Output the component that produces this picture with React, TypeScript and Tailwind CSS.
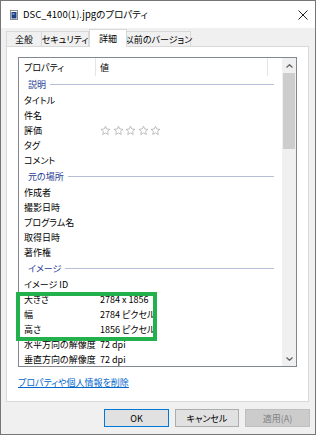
import React from "react";

type Row =
  | { kind: "group"; label: string }
  | { kind: "item"; label: string; value?: string; stars?: boolean };

const rows: Row[] = [
  { kind: "group", label: "説明" },
  { kind: "item", label: "タイトル" },
  { kind: "item", label: "件名" },
  { kind: "item", label: "評価", stars: true },
  { kind: "item", label: "タグ" },
  { kind: "item", label: "コメント" },
  { kind: "group", label: "元の場所" },
  { kind: "item", label: "作成者" },
  { kind: "item", label: "撮影日時" },
  { kind: "item", label: "プログラム名" },
  { kind: "item", label: "取得日時" },
  { kind: "item", label: "著作権" },
  { kind: "group", label: "イメージ" },
  { kind: "item", label: "イメージ ID" },
  { kind: "item", label: "大きさ", value: "2784 x 1856" },
  { kind: "item", label: "幅", value: "2784 ピクセル" },
  { kind: "item", label: "高さ", value: "1856 ピクセル" },
  { kind: "item", label: "水平方向の解像度", value: "72 dpi" },
  { kind: "item", label: "垂直方向の解像度", value: "72 dpi" },
];

const tabs = [
  { label: "全般", w: "w-[36px]" },
  { label: "セキュリティ", w: "w-[48px]" },
  { label: "詳細", w: "w-[38px]", active: true },
  { label: "以前のバージョン", w: "w-[65px]" },
];

const Star = () => (
  <svg width="11" height="11" viewBox="0 0 24 24" fill="none" stroke="#a8a8a8" strokeWidth="1.6" strokeLinejoin="round">
    <path d="M12 2.5l2.9 6.3 6.8.7-5.1 4.6 1.5 6.7L12 17.3l-6.1 3.5 1.5-6.7-5.1-4.6 6.8-.7z" />
  </svg>
);

const App = () => {
  return (
    <div className="relative w-[316px] h-[435px] border border-[#767676] bg-[#f0f0f0] flex flex-col font-['Noto_Sans_CJK_JP',sans-serif] [font-feature-settings:'palt'] text-[9px] text-black leading-none overflow-hidden">
      {/* title bar */}
      <div className="h-[27px] bg-white flex items-center pl-[9px] pr-[7px] shrink-0">
        <svg width="8" height="10" viewBox="0 0 8 10" className="mr-[5px]">
          <rect x="0.5" y="0.5" width="7" height="9" fill="#ffffff" stroke="#8a8a8a" />
          <rect x="1.5" y="2" width="5" height="6.5" fill="#1c3f86" />
          <rect x="2.5" y="3" width="2" height="2" fill="#6d8fc7" />
        </svg>
        <span className="text-[9.5px] text-black">DSC_4100(1).jpgのプロパティ</span>
        <div className="flex-1" />
        <svg width="10" height="10" viewBox="0 0 10 10" stroke="#222" strokeWidth="1">
          <path d="M0.5 0.5L9.5 9.5M9.5 0.5L0.5 9.5" />
        </svg>
      </div>

      {/* tabs */}
      <div className="h-[18px] flex items-end pl-[5px] shrink-0">
        {tabs.map((t) =>
          t.active ? (
            <div
              key={t.label}
              className={`${t.w} h-[18px] -mb-px bg-white border border-[#d9d9d9] border-b-0 flex items-center justify-center relative z-10`}
            >
              {t.label}
            </div>
          ) : (
            <div
              key={t.label}
              className={`${t.w} h-[15px] bg-[#f0f0f0] border border-[#d9d9d9] border-b-0 -ml-px first:ml-0 flex items-center justify-center whitespace-nowrap`}
            >
              {t.label}
            </div>
          )
        )}
      </div>

      {/* panel */}
      <div className="ml-[5px] w-[303px] h-[356px] bg-white border border-[#d9d9d9] pt-[10px] pl-[11px] shrink-0 flex flex-col">
        <div className="w-[279px] h-[310px] border border-[#828790] flex overflow-hidden">
          <div className="flex-1 flex flex-col overflow-hidden">
            {/* header */}
            <div className="h-[18px] flex items-stretch shrink-0">
              <div className="w-[77px] border-r border-[#e5e5e5] flex items-center pl-[5px]">プロパティ</div>
              <div className="w-[172px] border-r border-[#e5e5e5] flex items-center pl-[4px]">値</div>
              <div className="flex-1" />
            </div>
            {rows.map((r, i) =>
              r.kind === "group" ? (
                <div key={i} className="h-[17px] flex items-center pl-[9px] pr-[8px] shrink-0">
                  <span className="text-[#1e3c96] mr-[4px]">{r.label}</span>
                  <div className="flex-1 h-px bg-[#b4bfd6]" />
                </div>
              ) : (
                <div key={i} className="h-[15px] flex items-center shrink-0">
                  <div className="w-[77px] pl-[5px] whitespace-nowrap">{r.label}</div>
                  <div className="pl-[4px] flex items-center whitespace-nowrap">
                    {r.stars ? (
                      <div className="flex gap-[1.5px]">
                        <Star />
                        <Star />
                        <Star />
                        <Star />
                        <Star />
                      </div>
                    ) : (
                      r.value
                    )}
                  </div>
                </div>
              )
            )}
          </div>
          {/* scrollbar */}
          <div className="w-[14px] bg-[#f0f0f0] flex flex-col items-center shrink-0">
            <div className="h-[15px] flex items-center justify-center">
              <svg width="7" height="4" viewBox="0 0 7 4" fill="none" stroke="#606060" strokeWidth="1.2">
                <path d="M0.5 3.5L3.5 0.7L6.5 3.5" />
              </svg>
            </div>
            <div className="w-[12px] h-[76px] bg-[#cdcdcd]" />
            <div className="flex-1" />
            <div className="h-[15px] flex items-center justify-center">
              <svg width="7" height="4" viewBox="0 0 7 4" fill="none" stroke="#606060" strokeWidth="1.2">
                <path d="M0.5 0.5L3.5 3.3L6.5 0.5" />
              </svg>
            </div>
          </div>
        </div>
        <div className="mt-[10px] h-[10px] flex items-center">
          <span className="text-[#0066cc] underline underline-offset-1">プロパティや個人情報を削除</span>
        </div>
      </div>

      {/* buttons */}
      <div className="flex justify-end gap-[6px] pr-[5px] mt-[7px]">
        <button className="w-[65px] h-[18px] bg-[#e1e1e1] border border-[#0078d7] flex items-center justify-center">OK</button>
        <button className="w-[64px] h-[18px] bg-[#e1e1e1] border border-[#adadad] flex items-center justify-center">キャンセル</button>
        <button className="w-[65px] h-[18px] bg-[#cccccc] border border-[#bfbfbf] text-[#838383] flex items-center justify-center">適用(A)</button>
      </div>

      {/* annotation box */}
      <div className="absolute left-[15px] top-[291px] w-[141px] h-[49px] border-[4px] border-[#22b14c] pointer-events-none" />
    </div>
  );
};

export default App;
